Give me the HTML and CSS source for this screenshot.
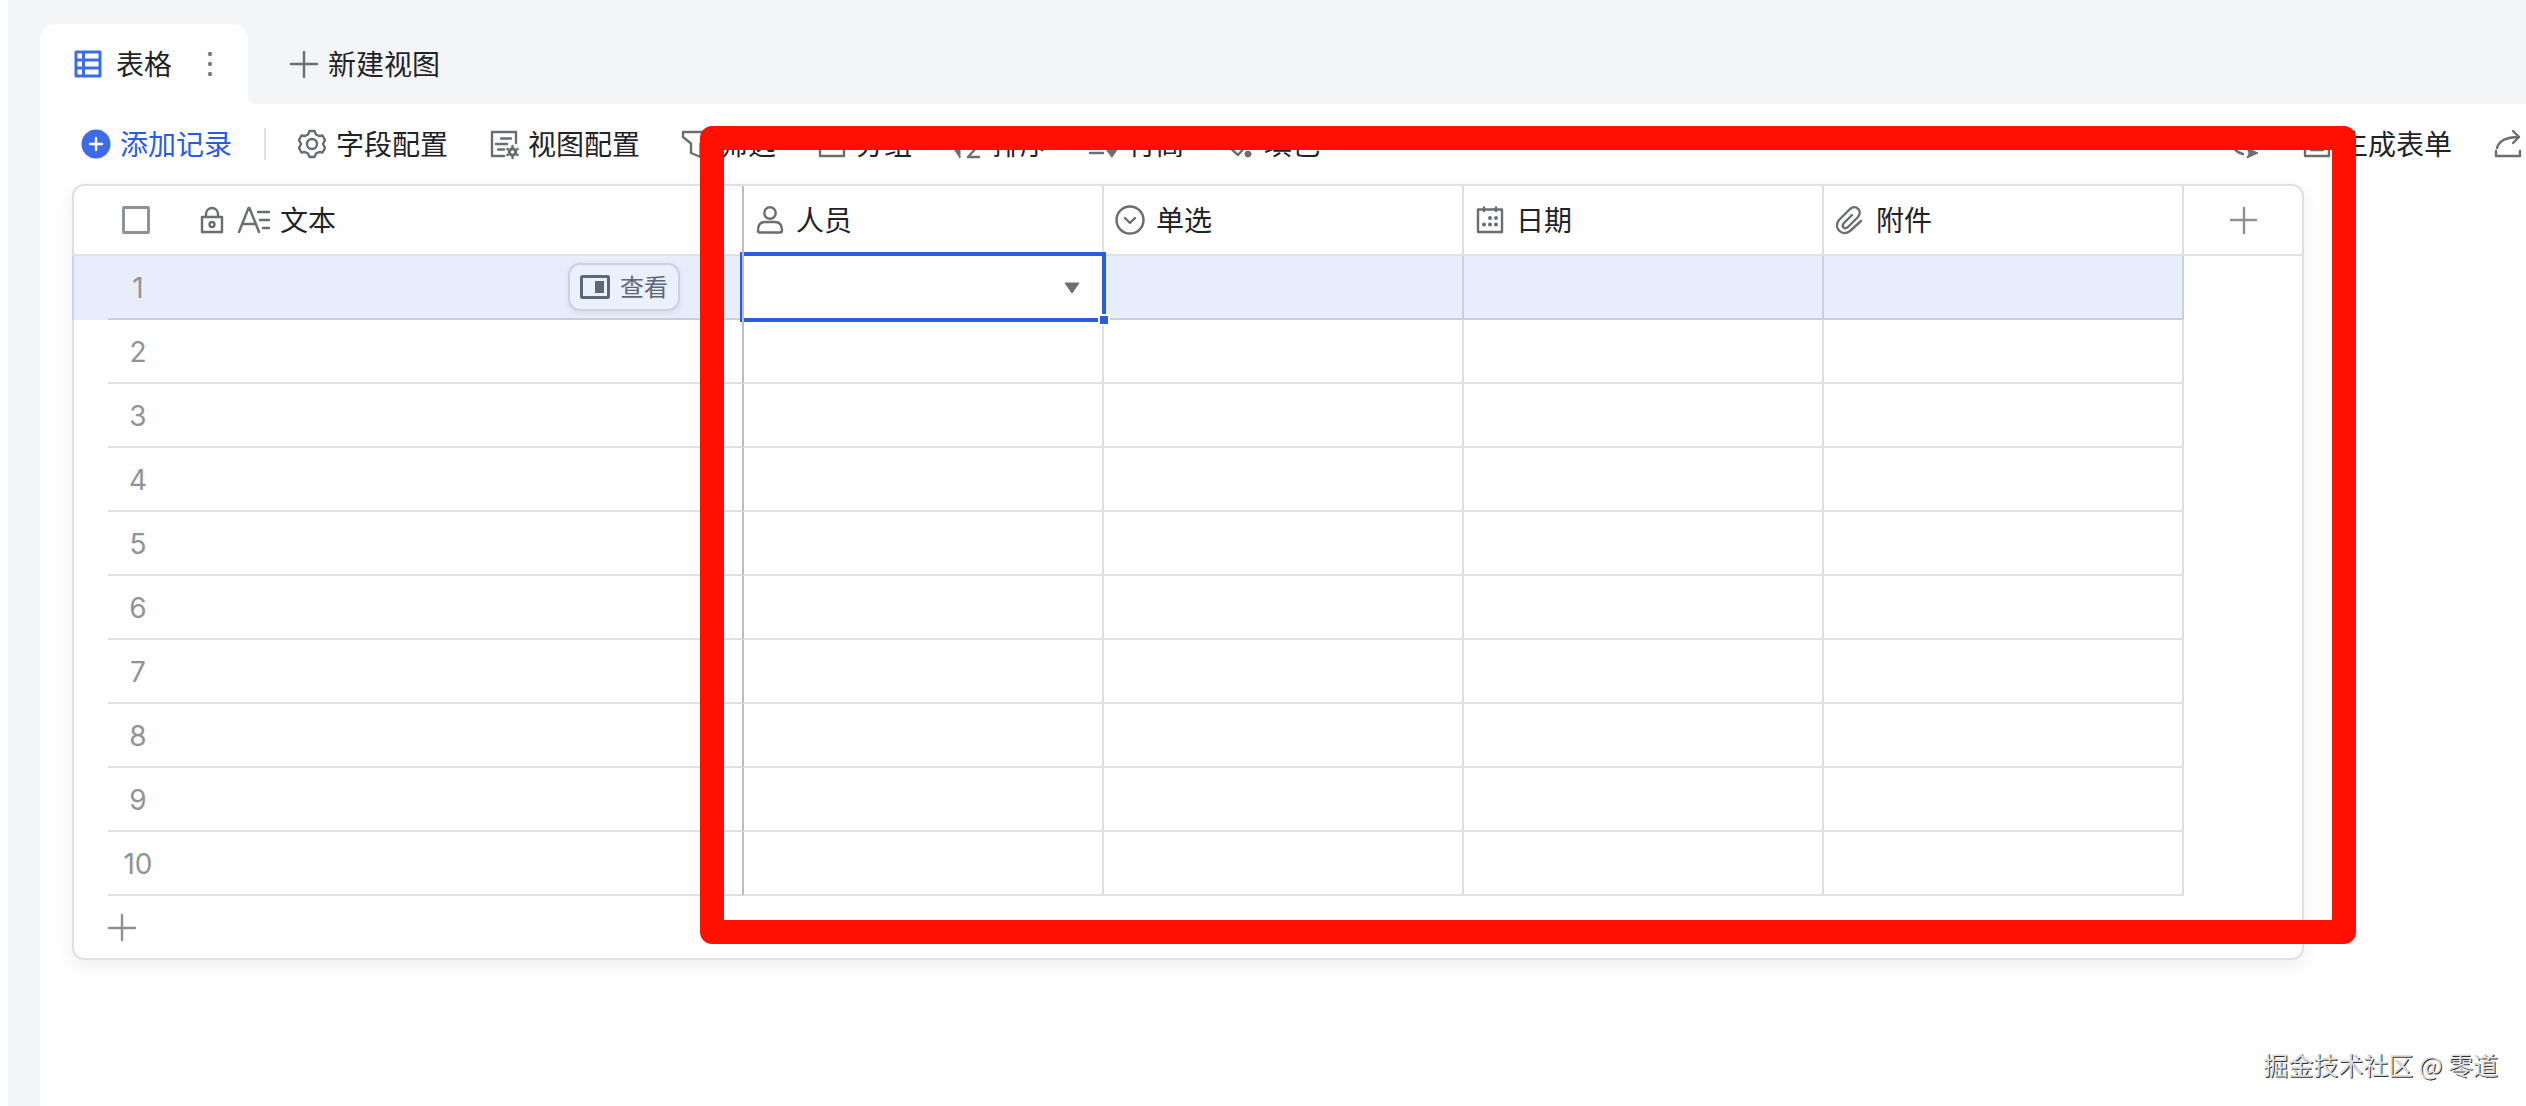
FILE: index.html
```html
<!DOCTYPE html>
<html lang="zh-CN">
<head>
<meta charset="utf-8">
<meta name="viewport" content="width=device-width, initial-scale=1">
<title>表格</title>
<link rel="stylesheet" href="styles.css">
</head>
<body>
<div class="app">
  <nav class="tabs">
    <div class="tab">
      <a class="tab-link" href="#grid">
        <svg class="icon blue" viewBox="0 0 28 28"><path d="M2 2h24v24H2zM9.500 2v24M2 10h24M2 18h24"/></svg>
        <span>表格</span>
      </a>
      <button class="more" type="button" aria-label="更多">
        <svg class="dots" viewBox="0 0 8 28"><circle cx="4" cy="4" r="2.200"/><circle cx="4" cy="14" r="2.200"/><circle cx="4" cy="24" r="2.200"/></svg>
      </button>
    </div>
    <button class="tool new-view" type="button">
      <svg class="icon" viewBox="0 0 28 28"><path d="M14 2v25M1 14h26"/></svg>
      <span>新建视图</span>
    </button>
  </nav>

  <main class="panel">
    <div class="toolbar">
      <button class="tool primary" type="button">
        <svg class="icon" viewBox="0 0 28 28"><circle class="disc" cx="14" cy="14" r="14.500"/><path class="cross" d="M14 8v12M8 14h12"/></svg>
        <span>添加记录</span>
      </button>
      <span class="divider"></span>
      <button class="tool" type="button">
        <svg class="icon" viewBox="0 0 28 28"><path d="M11.500 1h5l1.500 3.500 3 1.500 3.500-.5 2.500 4.500-2 4 2 4-2.500 4.500-3.500-.5-3 1.500-1.500 3.500h-5L10 23.500l-3-1.500-3.500.5L1 18l2-4-2-4 2.500-4.500L7 6l3-1.500z"/><circle cx="14" cy="14" r="5"/></svg>
        <span>字段配置</span>
      </button>
      <button class="tool" type="button">
        <svg class="icon" viewBox="0 0 28 28"><path d="M14 26H2V2h24v11M11 8.500h10M6 14h11M8 19.500h6"/><circle class="fat" cx="22.500" cy="22" r="3.200"/><path d="M22.500 16v3M22.500 25v3M17.300 19l2.500 1.500M25.200 23.500l2.500 1.500M17.300 25l2.500-1.500M25.200 20.500l2.500-1.500"/></svg>
        <span>视图配置</span>
      </button>
      <button class="tool" type="button">
        <svg class="icon" viewBox="0 0 28 28"><path d="M1 2h25v4l-7.500 7.500V27L9 23V13.500L1 7z"/></svg>
        <span>筛选</span>
      </button>
      <button class="tool" type="button">
        <svg class="icon" viewBox="0 0 28 28"><path d="M2 2h24v24H2zM8 10h12"/></svg>
        <span>分组</span>
      </button>
      <button class="tool" type="button">
        <svg class="icon" viewBox="0 0 28 28"><path class="solid" d="M6 2v26L0 19h5V2z"/><path d="M15 11l4-9 4 9M14 16h10L14 27h11"/></svg>
        <span>排序</span>
      </button>
      <button class="tool" type="button">
        <svg class="icon" viewBox="0 0 28 28"><path d="M0 4h13M0 13.500h12M0 23h13M22 4v20"/><path class="solid" d="M17 20h10l-5 7zM17 8h10l-5-7z"/></svg>
        <span>行高</span>
      </button>
      <button class="tool" type="button">
        <svg class="icon" viewBox="0 0 28 28"><path d="M10 3l11 12-9 10L1 15z"/><circle class="solid" cx="22" cy="24" r="3"/></svg>
        <span>填色</span>
      </button>
      <div class="toolbar-end">
        <button class="tool" type="button" aria-label="重做">
          <svg class="icon" viewBox="0 0 28 28"><path d="M22 5H11C-2 6-3 21 11 24"/><path class="solid" d="M15 18l11 5-11 5 2-4.500z"/></svg>
        </button>
        <button class="tool" type="button">
          <svg class="icon" viewBox="0 0 28 28"><path d="M3 2h24v24H3zM9 8h12M9 14h12M9 20h12"/></svg>
          <span>生成表单</span>
        </button>
        <button class="tool" type="button" aria-label="分享">
          <svg class="icon" viewBox="0 0 28 28"><path d="M3 18C5 10 12 7 25 7M19 1l6 6-6 6M2 21v5h24v-5"/></svg>
        </button>
      </div>
    </div>

    <section class="card" id="grid">
      <table class="grid">
        <colgroup><col class="c-gutter"><col class="c-num"><col class="c-text"><col class="c-field"><col class="c-field"><col class="c-field"><col class="c-field"><col class="c-add"></colgroup>
        <thead>
          <tr>
            <th></th>
            <th><input class="check" type="checkbox" aria-label="全选"></th>
            <th class="frozen"><span class="field first">
              <svg class="icon lock" viewBox="0 0 24 28"><path d="M2 11h20v15H2zM6 11V8a6 6 0 0 1 12 0v3"/><circle cx="12" cy="18.500" r="2.500"/></svg>
              <svg class="icon text" viewBox="0 0 32 28"><path d="M1 26L10.500 2h1L21 26M4 18h14M20 6h11M22 14h9M25 22h6"/></svg>
              <span>文本</span></span></th>
            <th><span class="field"><svg class="icon" viewBox="0 0 28 28"><circle cx="14" cy="7" r="5.700"/><path d="M2 24.500C2 19 4 16 9 16h10c5 0 7 3 7 8.500 0 1.500-.5 2-2 2H4c-1.500 0-2-.5-2-2z"/></svg><span>人员</span></span></th>
            <th><span class="field"><svg class="icon" viewBox="0 0 28 28"><circle cx="14" cy="14" r="13.500"/><path d="M9 12l5 5 5-5"/></svg><span>单选</span></span></th>
            <th><span class="field"><svg class="icon" viewBox="0 0 28 28"><path d="M2 3.500h24V26H2zM8 1.500V5M20 1.500V5"/><path class="dotted" d="M14 12h0M20 12h0M8 18.500h0M14 18.500h0M20 18.500h0"/></svg><span>日期</span></span></th>
            <th><span class="field"><svg class="icon" viewBox="0 0 28 28"><path d="M25 15L14 25C6 31-3 22 3 14L14 3c6-5 13 2 8 8L12 21c-4 3-7-1-4-4l8-8"/></svg><span>附件</span></span></th>
            <th class="add-col"><button class="plain" type="button" aria-label="添加字段"><svg class="icon pale" viewBox="0 0 28 28"><path d="M15 2v25M2 14h25"/></svg></button></th>
          </tr>
        </thead>
        <tbody>
          <tr class="active">
            <td></td><td>1</td>
            <td class="frozen"><button class="view" type="button"><svg class="view-icon" viewBox="0 0 30 24"><rect x="1.500" y="1.500" width="27" height="21" rx="1"/><path class="solid" d="M15 6h9v12h-9z"/></svg><span>查看</span></button></td>
            <td class="selected">
              <div class="editor">
                <select aria-label="人员"><option></option></select>
                <svg class="caret" viewBox="0 0 16 12"><path d="M1 1h14L8 11z"/></svg>
              </div>
              <span class="handle"></span>
            </td>
            <td></td><td></td><td></td><td></td>
          </tr>
          <tr><td></td><td>2</td><td class="frozen"></td><td></td><td></td><td></td><td></td><td></td></tr>
          <tr><td></td><td>3</td><td class="frozen"></td><td></td><td></td><td></td><td></td><td></td></tr>
          <tr><td></td><td>4</td><td class="frozen"></td><td></td><td></td><td></td><td></td><td></td></tr>
          <tr><td></td><td>5</td><td class="frozen"></td><td></td><td></td><td></td><td></td><td></td></tr>
          <tr><td></td><td>6</td><td class="frozen"></td><td></td><td></td><td></td><td></td><td></td></tr>
          <tr><td></td><td>7</td><td class="frozen"></td><td></td><td></td><td></td><td></td><td></td></tr>
          <tr><td></td><td>8</td><td class="frozen"></td><td></td><td></td><td></td><td></td><td></td></tr>
          <tr><td></td><td>9</td><td class="frozen"></td><td></td><td></td><td></td><td></td><td></td></tr>
          <tr><td></td><td>10</td><td class="frozen"></td><td></td><td></td><td></td><td></td><td></td></tr>
        </tbody>
      </table>
      <button class="plain add-row" type="button" aria-label="添加行"><svg class="icon pale" viewBox="0 0 28 28"><path d="M14 2v25M1 15h26"/></svg></button>
    </section>
  </main>
</div>
<div class="highlight"></div>
<div class="watermark">掘金技术社区 @ 零道</div>
</body>
</html>
```
FILE: styles.css
```css
* { box-sizing: border-box; }

body {
  position: relative;
  margin: 0;
  min-height: 100vh;
  overflow: hidden;
  background: #fefefe;
  color: #1f2329;
  font: 28px/40px Inter, "Noto Sans CJK SC", sans-serif;
}

button, select {
  margin: 0;
  padding: 0;
  border: 0;
  background: none;
  color: inherit;
  font: inherit;
}

.app {
  min-height: 100vh;
  margin-left: 8px;
  padding: 24px 0 0 32px;
  background: #f4f5f7;
  display: flex;
  flex-direction: column;
}

.icon {
  width: 28px;
  height: 28px;
  flex: none;
  fill: none;
  stroke: #6a6e71;
  stroke-width: 2.4;
  stroke-linejoin: round;
  stroke-linecap: round;
  overflow: visible;
}
.icon.blue { stroke: #3f6be4; stroke-width: 3; }
.icon.pale { stroke: #8d9194; }
.icon .solid { fill: #6a6e71; stroke-width: 1; }
.icon .fat { stroke-width: 3; }
.icon .dotted { stroke-width: 4; }

/* the CJK glyphs ride high in their line box */
.tab-link span, .tool span, .field > span, .view span { padding-top: 2px; }

.tabs { display: flex; height: 80px; }
.tab {
  position: relative;
  width: 208px;
  padding: 0 32px 0 34px;
  display: flex;
  align-items: center;
  justify-content: space-between;
  background: #fefefe;
  border-radius: 16px 16px 0 0;
}
.tab::after {
  content: "";
  position: absolute;
  left: 100%;
  bottom: 0;
  width: 8px;
  height: 8px;
  background: radial-gradient(circle at 100% 0, transparent 8px, #fefefe 8px);
}
.tab-link {
  display: flex;
  align-items: center;
  gap: 14px;
  color: inherit;
  text-decoration: none;
}
.more { display: flex; padding: 0 2px; }
.dots { width: 8px; height: 28px; fill: #7a7f85; }
.new-view { margin-left: 42px; }

.panel { flex: 1; background: #fefefe; padding-left: 32px; }

.toolbar {
  display: flex;
  align-items: center;
  gap: 42px;
  height: 80px;
  padding: 0 4px 0 10px;
}
.tool {
  display: flex;
  align-items: center;
  gap: 10px;
  white-space: nowrap;
}
.primary { color: #2b5be0; margin-right: -10px; }
.primary .disc { fill: #3d6ae6; stroke: none; }
.primary .cross { stroke: #fff; }
.divider { width: 2px; height: 32px; background: #dee0e3; margin-right: -10px; }
.toolbar-end { display: flex; gap: 42px; margin-left: auto; }

.card {
  width: fit-content;
  border: 2px solid #dfe0e2;
  border-radius: 12px;
  box-shadow: 0 6px 16px rgba(31, 35, 41, 0.06);
}
.grid {
  table-layout: fixed;
  width: 2228px;
  border-collapse: separate;
  border-spacing: 0;
}
.c-gutter { width: 34px; }
.c-num { width: 60px; }
.c-text { width: 576px; }
.c-field { width: 360px; }
.c-add { width: 118px; }

th, td {
  padding: 0;
  border: 0 solid #dfe0e2;
  border-bottom-width: 2px;
  font-weight: 400;
  text-align: left;
}
th { height: 70px; }
td { height: 64px; }
th:nth-child(n+3):nth-child(-n+7),
td:nth-child(n+3):nth-child(-n+7) { border-right-width: 2px; }
th.frozen, td.frozen { border-right-color: #bbbdc0; }
td:first-child, td:last-child { border-bottom-width: 0; }
td:nth-child(2) { padding-top: 2px; color: #909498; text-align: center; }

.check {
  appearance: none;
  display: block;
  width: 28px;
  height: 28px;
  margin: 0 14px;
  border: 3px solid #8f9396;
  border-radius: 2px;
}
.field {
  display: flex;
  align-items: center;
  gap: 12px;
  padding-left: 12px;
}
.field.first { padding-left: 32px; gap: 10px; }
.lock { width: 24px; }
.text { width: 32px; margin-left: 4px; }
.plain { display: flex; }
.add-col .plain { margin: 0 auto; }
.add-row { height: 62px; padding-left: 34px; align-items: center; }

.active td:not(:last-child) { background: #e7edfb; border-color: #cacfde; }
.active td:first-child { box-shadow: -2px 0 #cdd4ea; }
.active td.frozen { border-right-color: #bbbdc0; }

.view {
  display: flex;
  align-items: center;
  gap: 10px;
  height: 48px;
  margin-left: auto;
  margin-right: 62px;
  padding: 0 10px;
  border: 2px solid #cbd1df;
  border-radius: 12px;
  background: #eaf0fc;
  box-shadow: 0 2px 6px rgba(31, 35, 41, 0.08);
  color: #5e6778;
  font-size: 24px;
}
.view-icon { width: 30px; height: 24px; fill: none; stroke: #5e6778; stroke-width: 3; }
.view-icon .solid { fill: #5e6778; stroke: none; }

td.selected { position: relative; }
.editor {
  position: absolute;
  inset: -4px -4px -4px 0;
  display: grid;
  align-items: center;
  border: 4px solid #2b5be0;
  border-left: 0;
  box-shadow: -2px 0 #bbbdc0, -4px 0 #2b5be0;
  background: #fff;
}
.editor > * { grid-area: 1 / 1; }
.editor select {
  appearance: none;
  width: 100%;
  height: 100%;
}
.caret {
  justify-self: end;
  width: 16px;
  height: 12px;
  margin: 2px 22px 0 0;
  fill: #6a6e71;
  stroke: #6a6e71;
  stroke-linejoin: round;
  pointer-events: none;
}
.handle {
  position: absolute;
  right: -8px;
  bottom: -8px;
  width: 12px;
  height: 12px;
  border: 2px solid #fff;
  background: #2b5be0;
}

/* annotation drawn over the field columns */
.highlight {
  position: absolute;
  left: 700px;
  top: 126px;
  width: 1656px;
  height: 818px;
  border: 24px solid #ff1000;
  border-radius: 12px;
  pointer-events: none;
}
.watermark {
  position: absolute;
  right: 28px;
  bottom: 22px;
  color: #dedede;
  font-family: "Noto Sans CJK SC", sans-serif;
  font-size: 25px;
  text-shadow: 1px 1px 0 #333;
}
```
